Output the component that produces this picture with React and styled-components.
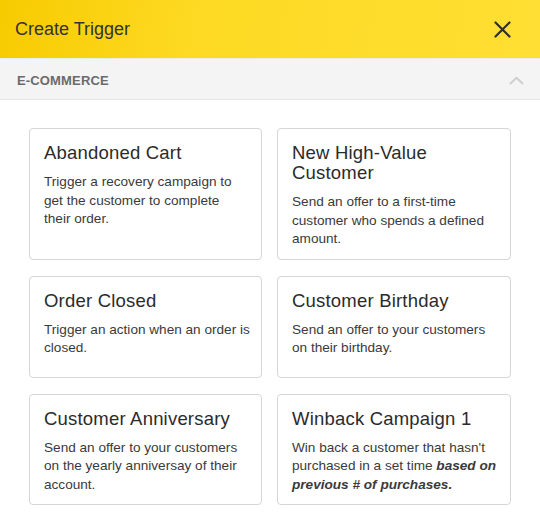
import React from 'react';
import styled, { createGlobalStyle } from 'styled-components';

const GlobalStyle = createGlobalStyle`
  html, body {
    margin: 0;
    padding: 0;
    background: #fff;
    font-family: "Liberation Sans", Arial, Helvetica, sans-serif;
  }
  * { box-sizing: border-box; }
`;

const Page = styled.div`
  width: 540px;
  min-height: 517px;
  background: #fff;
`;

const Header = styled.div`
  height: 58px;
  display: flex;
  align-items: center;
  justify-content: space-between;
  padding: 1px 28px 0 15px;
  background: linear-gradient(100deg, #f7cb00 0%, #fdd922 35%, #ffdf33 100%);
`;

const HeaderTitle = styled.div`
  font-size: 18px;
  color: #333;
`;

const CloseButton = styled.button`
  border: 0;
  background: none;
  padding: 0;
  width: 20px;
  height: 20px;
  display: flex;
  align-items: center;
  justify-content: center;
  cursor: pointer;
`;

const SectionBar = styled.div`
  height: 42px;
  display: flex;
  align-items: center;
  justify-content: space-between;
  padding: 2px 16px 0 17px;
  background: #f4f4f4;
  border-top: 1px solid #ececec;
  border-bottom: 1px solid #e6e6e6;
`;

const SectionTitle = styled.div`
  font-size: 13px;
  font-weight: 700;
  color: #6b6b6b;
  letter-spacing: 0.15px;
`;

const Grid = styled.div`
  display: grid;
  grid-template-columns: 233px 234px;
  column-gap: 15px;
  row-gap: 16px;
  padding: 28px 29px 0 29px;
`;

const Card = styled.div`
  min-height: 102px;
  border: 1px solid #d6d6d6;
  border-radius: 4px;
  padding: 14px 8px 10px 14px;
  background: #fff;
`;

const CardTitle = styled.div`
  font-size: 18.5px;
  line-height: 20px;
  letter-spacing: 0.2px;
  color: #2b2b2b;
  margin-bottom: 10px;
`;

const CardText = styled.div`
  font-size: 13.6px;
  line-height: 18.5px;
  color: #3a3a3a;

  b {
    font-style: italic;
  }
`;

const triggers = [
  { title: 'Abandoned Cart', text: 'Trigger a recovery campaign to get the customer to complete their\u00a0order.' },
  { title: 'New High-Value Customer', text: 'Send an offer to a first-time customer who spends a defined amount.' },
  { title: 'Order Closed', text: 'Trigger an action when an order is closed.' },
  { title: 'Customer Birthday', text: 'Send an offer to your customers on their birthday.' },
  { title: 'Customer Anniversary', text: 'Send an offer to your customers on the yearly anniversay of their account.' },
  {
    title: 'Winback Campaign 1',
    text: (
      <>
        Win back a customer that hasn't purchased in a set time <b>based on previous # of purchases.</b>
      </>
    ),
  },
];

const App = () => {
  return (
    <Page>
      <GlobalStyle />
      <Header>
        <HeaderTitle>Create Trigger</HeaderTitle>
        <CloseButton aria-label="Close">
          <svg width="17" height="17" viewBox="0 0 17 17">
            <path d="M1.5 1.5 L15.5 15.5 M15.5 1.5 L1.5 15.5" stroke="#2f2f2f" strokeWidth="2.2" strokeLinecap="round" />
          </svg>
        </CloseButton>
      </Header>
      <SectionBar>
        <SectionTitle>E-COMMERCE</SectionTitle>
        <svg width="15" height="9" viewBox="0 0 15 9">
          <path d="M1.5 7.5 L7.5 1.8 L13.5 7.5" fill="none" stroke="#cfcfcf" strokeWidth="2" strokeLinecap="round" strokeLinejoin="round" />
        </svg>
      </SectionBar>
      <Grid>
        {triggers.map((t) => (
          <Card key={t.title}>
            <CardTitle>{t.title}</CardTitle>
            <CardText>{t.text}</CardText>
          </Card>
        ))}
      </Grid>
    </Page>
  );
};

export default App;
